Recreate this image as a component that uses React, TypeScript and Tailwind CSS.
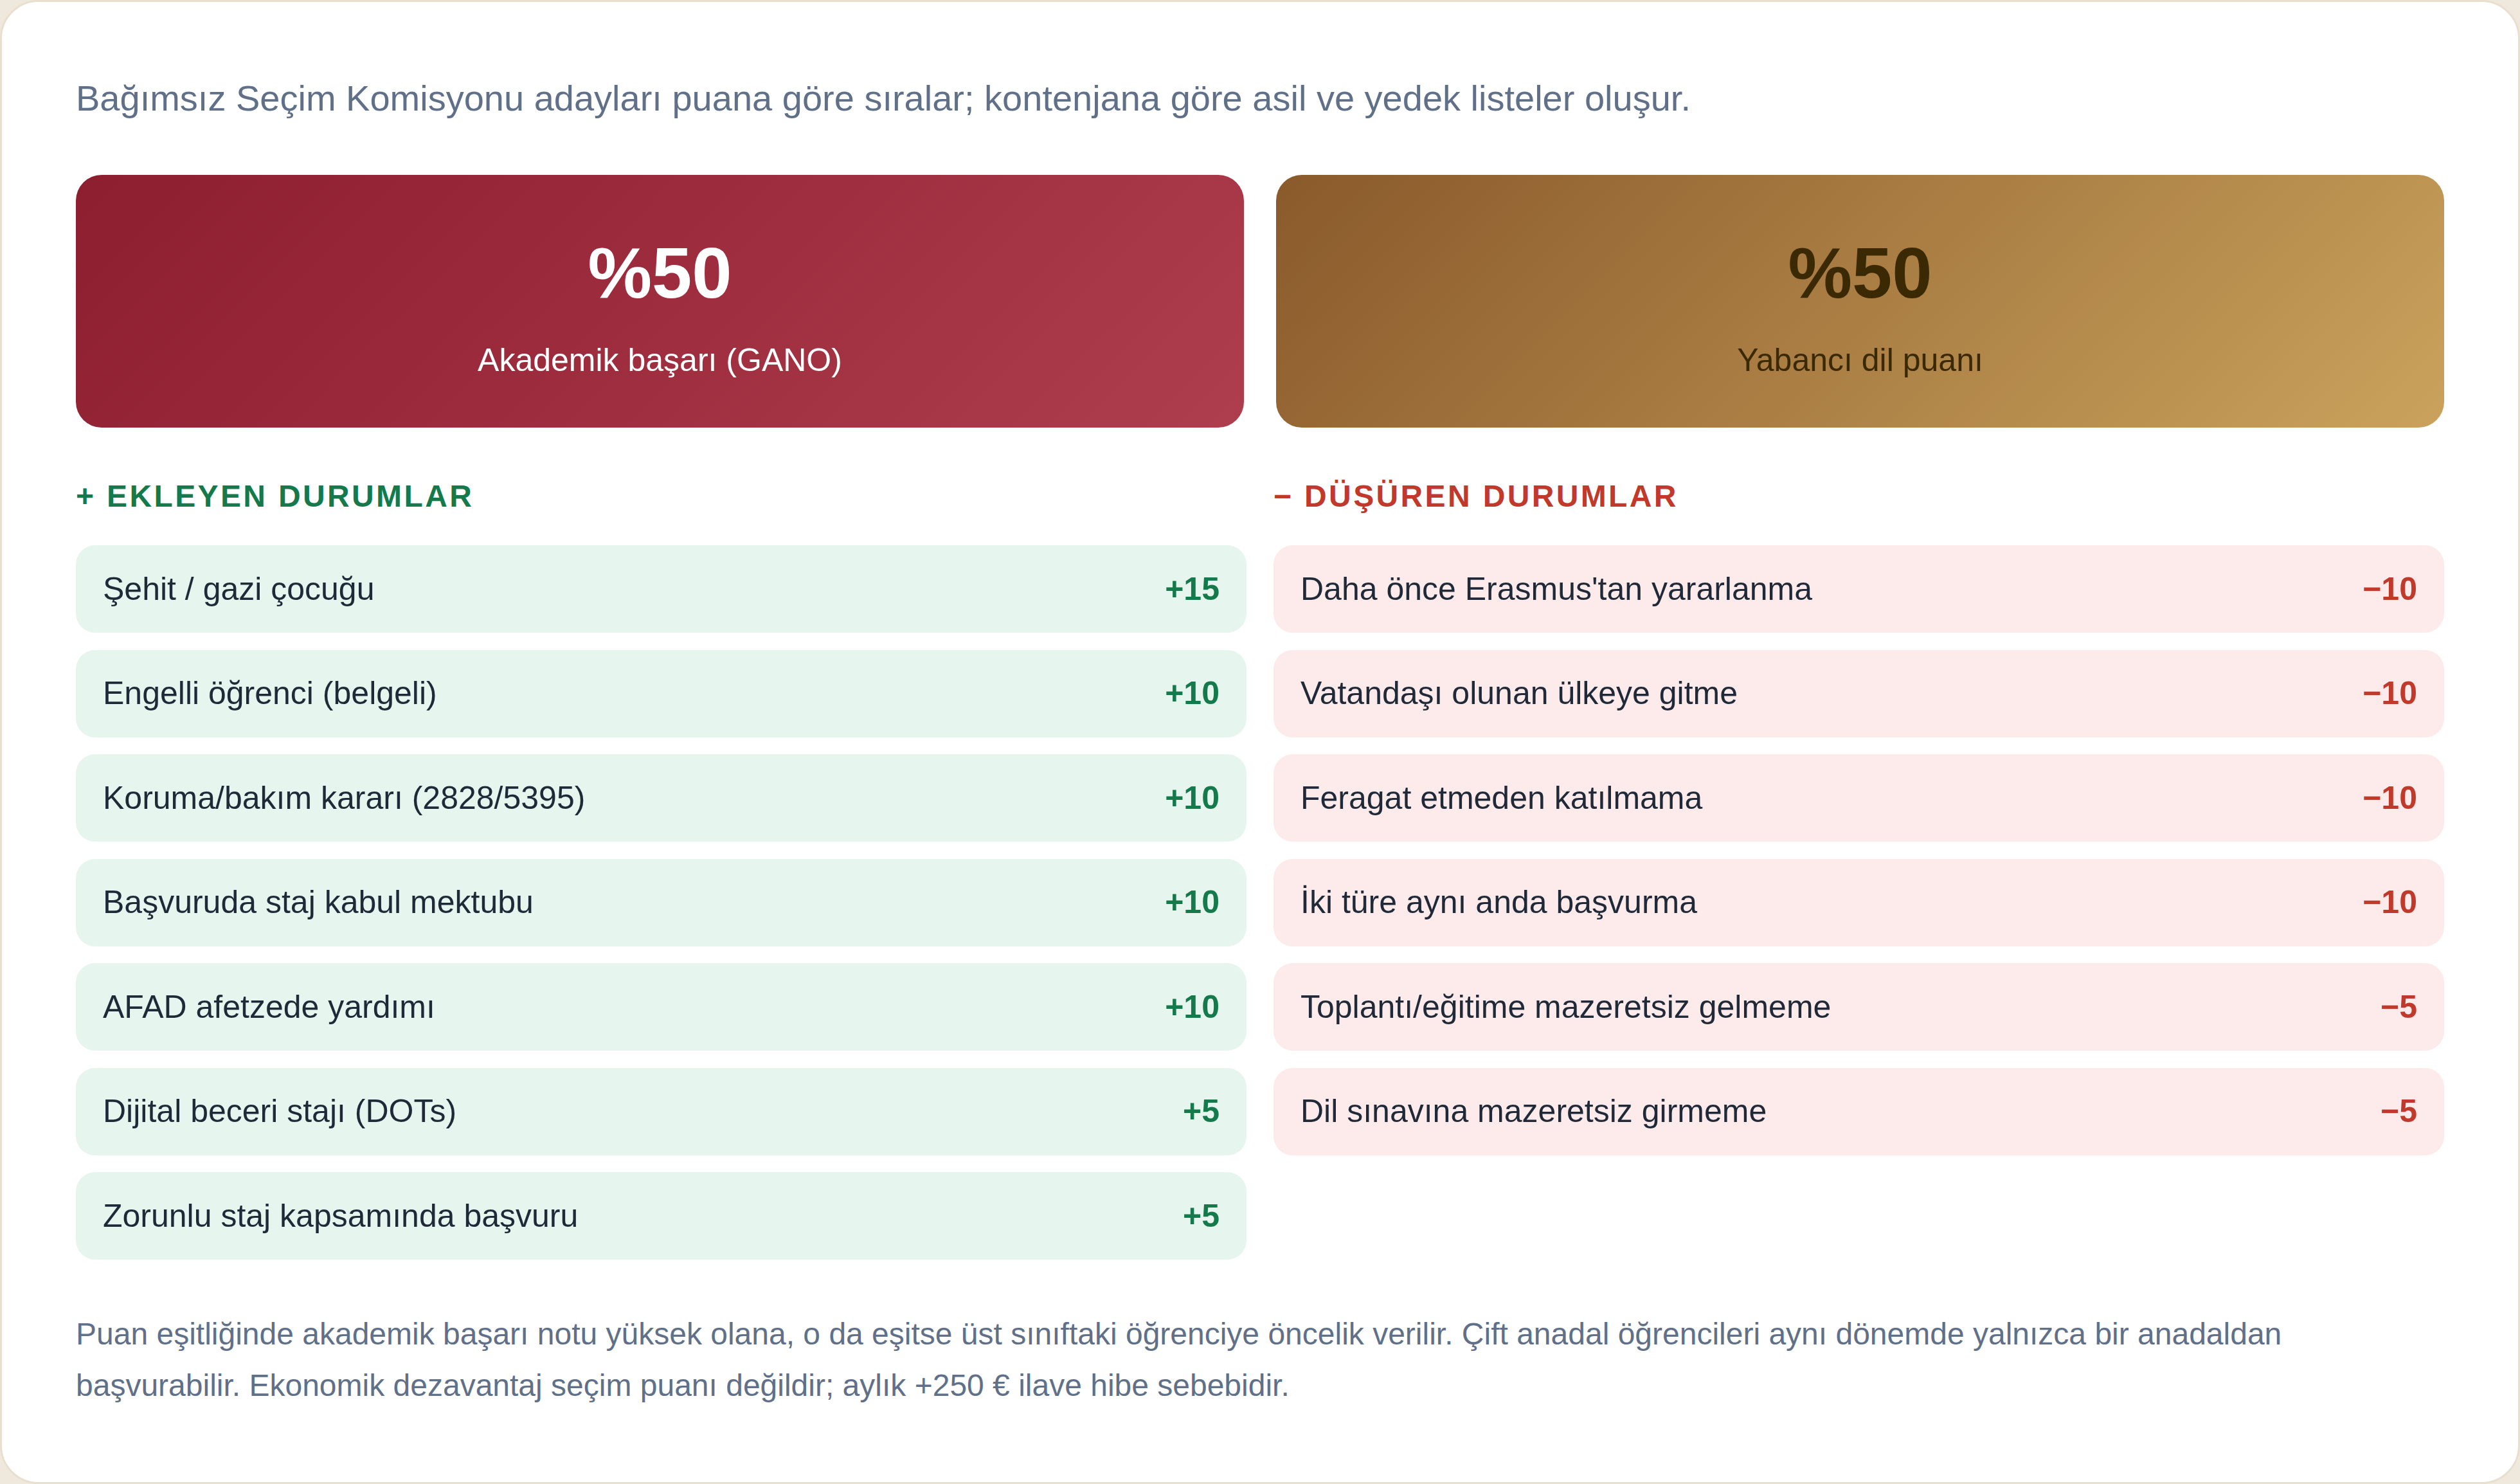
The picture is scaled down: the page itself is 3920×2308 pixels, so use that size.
import React from 'react';

type Item = { label: string; value: string };

const plus: Item[] = [
  { label: 'Şehit / gazi çocuğu', value: '+15' },
  { label: 'Engelli öğrenci (belgeli)', value: '+10' },
  { label: 'Koruma/bakım kararı (2828/5395)', value: '+10' },
  { label: 'Başvuruda staj kabul mektubu', value: '+10' },
  { label: 'AFAD afetzede yardımı', value: '+10' },
  { label: 'Dijital beceri stajı (DOTs)', value: '+5' },
  { label: 'Zorunlu staj kapsamında başvuru', value: '+5' },
];

const minus: Item[] = [
  { label: "Daha önce Erasmus'tan yararlanma", value: '−10' },
  { label: 'Vatandaşı olunan ülkeye gitme', value: '−10' },
  { label: 'Feragat etmeden katılmama', value: '−10' },
  { label: 'İki türe aynı anda başvurma', value: '−10' },
  { label: 'Toplantı/eğitime mazeretsiz gelmeme', value: '−5' },
  { label: 'Dil sınavına mazeretsiz girmeme', value: '−5' },
];

const App: React.FC = () => {
  return (
    <div className="min-h-screen bg-[#efe8dc] font-['Liberation_Sans',Arial,sans-serif]">
      <div className="min-h-screen bg-white border-[3px] border-[#e8dfcf] rounded-[60px] px-[115px] pt-[108px] pb-[100px]">
        <p className="text-[56px] leading-[84px] text-[#607089]">
          Bağımsız Seçim Komisyonu adayları puana göre sıralar; kontenjana göre asil ve yedek listeler oluşur.
        </p>

        {/* weight cards */}
        <div className="grid grid-cols-2 gap-[50px] mt-[77px]">
          <div className="h-[393px] rounded-[40px] bg-[linear-gradient(135deg,#8d1e2f,#ae3d4d)] flex flex-col items-center pt-[97px] text-white">
            <div className="text-[112px] leading-[112px] font-bold">%50</div>
            <div className="text-[50px] leading-[70px] mt-[44px]">Akademik başarı (GANO)</div>
          </div>
          <div className="h-[393px] rounded-[40px] bg-[linear-gradient(135deg,#8a5a2b,#caa25c)] flex flex-col items-center pt-[97px] text-[#3b2904]">
            <div className="text-[112px] leading-[112px] font-bold">%50</div>
            <div className="text-[50px] leading-[70px] mt-[44px]">Yabancı dil puanı</div>
          </div>
        </div>

        <div className="grid grid-cols-2 gap-[42px] mt-[77px]">
          <div>
            <h3 className="text-[48px] leading-[60px] font-bold tracking-[0.07em] text-[#157a4b]">+ EKLEYEN DURUMLAR</h3>
            <div className="flex flex-col gap-[26.5px] mt-[46px]">
              {plus.map((it) => (
                <div key={it.label} className="h-[136px] rounded-[30px] bg-[#e6f5ee] flex items-center justify-between px-[42px]">
                  <span className="text-[50px] text-[#1f2937]">{it.label}</span>
                  <span className="text-[50px] font-bold text-[#157a4b]">{it.value}</span>
                </div>
              ))}
            </div>
          </div>
          <div>
            <h3 className="text-[48px] leading-[60px] font-bold tracking-[0.07em] text-[#c0392b]">− DÜŞÜREN DURUMLAR</h3>
            <div className="flex flex-col gap-[26.5px] mt-[46px]">
              {minus.map((it) => (
                <div key={it.label} className="h-[136px] rounded-[30px] bg-[#fdeaea] flex items-center justify-between px-[42px]">
                  <span className="text-[50px] text-[#1f2937]">{it.label}</span>
                  <span className="text-[50px] font-bold text-[#c0392b]">{it.value}</span>
                </div>
              ))}
            </div>
          </div>
        </div>

        <p className="mt-[76px] text-[48px] leading-[80px] text-[#607089]">
          Puan eşitliğinde akademik başarı notu yüksek olana, o da eşitse üst sınıftaki öğrenciye öncelik verilir. Çift anadal öğrencileri aynı dönemde yalnızca bir anadaldan başvurabilir. Ekonomik dezavantaj seçim puanı değildir; aylık +250 € ilave hibe sebebidir.
        </p>
      </div>
    </div>
  );
};

export default App;
